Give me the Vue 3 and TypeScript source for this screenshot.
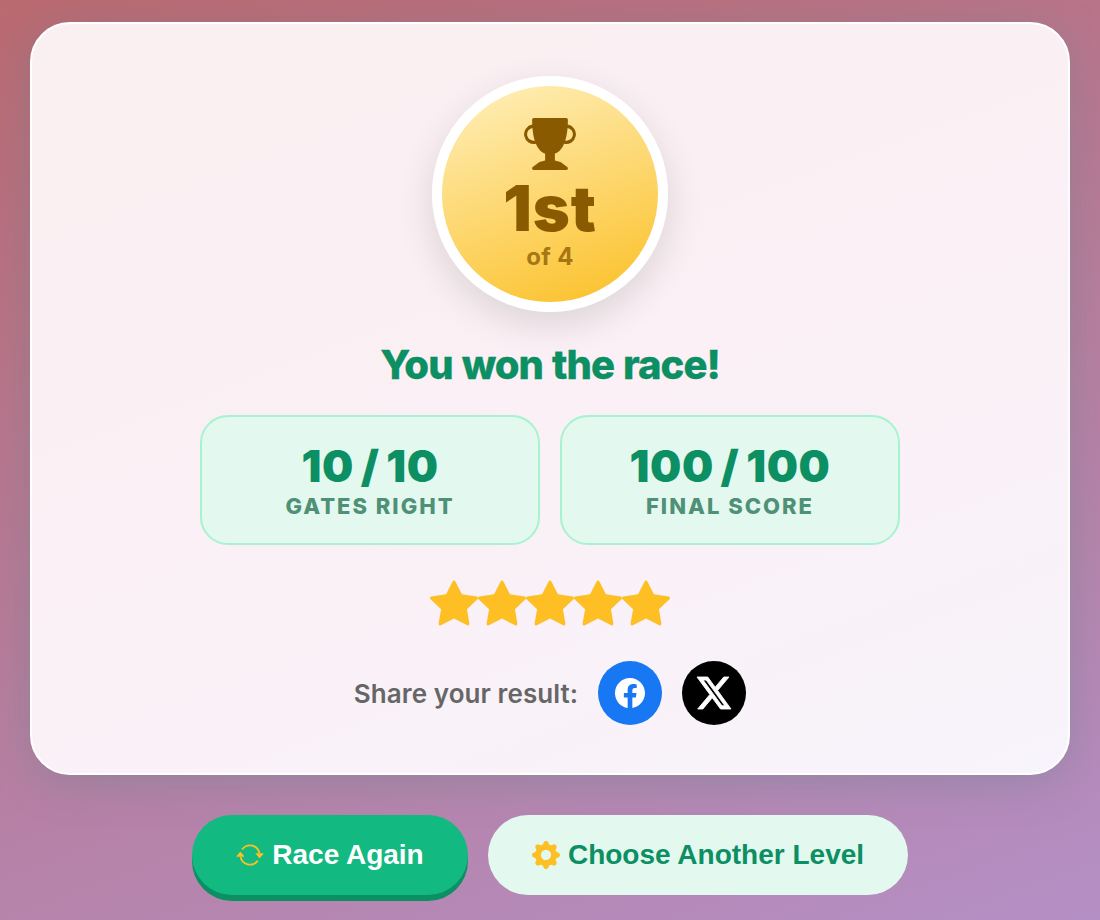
<script setup lang="ts">
interface Stat {
  value: string
  label: string
}

const stats: Stat[] = [
  { value: '10 / 10', label: 'Gates right' },
  { value: '100 / 100', label: 'Final score' },
]
const stars = 5
</script>

<template>
  <main class="screen">
    <section class="card">
      <div class="medal">
        <svg class="trophy" viewBox="0 0 16 16" aria-hidden="true">
          <path d="M2.5.5A.5.5 0 0 1 3 0h10a.5.5 0 0 1 .5.5q0 .807-.034 1.536a3 3 0 1 1-1.133 5.89c-.79 1.865-1.878 2.777-2.833 3.011v2.173l1.425.356c.194.048.377.135.537.255L13.3 15.1a.5.5 0 0 1-.3.9H3a.5.5 0 0 1-.3-.9l1.838-1.379c.16-.12.343-.207.537-.255L6.5 13.11v-2.173c-.955-.234-2.043-1.146-2.833-3.012a3 3 0 1 1-1.132-5.89A33 33 0 0 1 2.5.5m.099 2.54a2 2 0 0 0 .72 3.935c-.333-1.05-.588-2.346-.72-3.935m10.083 3.935a2 2 0 0 0 .72-3.935c-.133 1.59-.388 2.885-.72 3.935" />
        </svg>
        <div class="place">1st</div>
        <div class="field">of 4</div>
      </div>

      <h1 class="title">You won the race!</h1>

      <div class="stats">
        <div v-for="stat in stats" :key="stat.label" class="stat">
          <div class="value">{{ stat.value }}</div>
          <div class="label">{{ stat.label }}</div>
        </div>
      </div>

      <div class="stars">
        <svg v-for="n in stars" :key="n" viewBox="0 0 16 16" aria-hidden="true">
          <path d="M3.612 15.443c-.386.198-.824-.149-.746-.592l.83-4.73L.173 6.765c-.329-.314-.158-.888.283-.95l4.898-.696L7.538.792c.197-.39.73-.39.927 0l2.184 4.327 4.898.696c.441.062.612.636.282.95l-3.522 3.356.83 4.73c.078.443-.36.79-.746.592L8 13.187l-4.389 2.256z" />
        </svg>
      </div>

      <div class="share">
        <span class="share-text">Share your result:</span>
        <a class="social facebook" aria-label="Facebook">
          <svg viewBox="0 0 16 16" aria-hidden="true">
            <path d="M16 8.049c0-4.446-3.582-8.05-8-8.05C3.58 0-.002 3.603-.002 8.05c0 4.017 2.926 7.347 6.75 7.951v-5.625h-2.03V8.05H6.75V6.275c0-2.017 1.195-3.131 3.022-3.131.876 0 1.791.157 1.791.157v1.98h-1.009c-.993 0-1.303.621-1.303 1.258v1.51h2.218l-.354 2.326H9.25V16c3.824-.604 6.75-3.934 6.75-7.951" />
          </svg>
        </a>
        <a class="social x" aria-label="X">
          <svg viewBox="0 1.15 24 21.7" preserveAspectRatio="none" aria-hidden="true">
            <path d="M18.901 1.153h3.68l-8.04 9.19L24 22.846h-7.406l-5.8-7.584-6.638 7.584H.474l8.6-9.83L0 1.154h7.594l5.243 6.932ZM17.61 20.644h2.039L6.486 3.24H4.298Z" />
          </svg>
        </a>
      </div>
    </section>

    <div class="actions">
      <button class="btn primary" type="button">
        <svg viewBox="0 0 16 16" aria-hidden="true">
          <path d="M11.534 7h3.932a.25.25 0 0 1 .192.41l-1.966 2.36a.25.25 0 0 1-.384 0l-1.966-2.36a.25.25 0 0 1 .192-.41m-11 2h3.932a.25.25 0 0 0 .192-.41L2.692 6.23a.25.25 0 0 0-.384 0L.342 8.59A.25.25 0 0 0 .534 9" />
          <path d="M8 3c-1.552 0-2.94.707-3.857 1.818a.5.5 0 1 1-.771-.636A6.002 6.002 0 0 1 13.917 7H12.9A5 5 0 0 0 8 3M3.1 9a5.002 5.002 0 0 0 8.757 2.182.5.5 0 1 1 .771.636A6.002 6.002 0 0 1 2.083 9z" />
        </svg>
        <span>Race Again</span>
      </button>
      <button class="btn secondary" type="button">
        <svg viewBox="0 0 16 16" aria-hidden="true">
          <path d="M9.405 1.05c-.413-1.4-2.397-1.4-2.81 0l-.1.34a1.464 1.464 0 0 1-2.105.872l-.31-.17c-1.283-.698-2.686.705-1.987 1.987l.169.311c.446.82.023 1.841-.872 2.105l-.34.1c-1.4.413-1.4 2.397 0 2.81l.34.1a1.464 1.464 0 0 1 .872 2.105l-.17.31c-.698 1.283.705 2.686 1.987 1.987l.311-.169a1.464 1.464 0 0 1 2.105.872l.1.34c.413 1.4 2.397 1.4 2.81 0l.1-.34a1.464 1.464 0 0 1 2.105-.872l.31.17c1.283.698 2.686-.705 1.987-1.987l-.169-.311a1.464 1.464 0 0 1 .872-2.105l.34-.1c1.4-.413 1.4-2.397 0-2.81l-.34-.1a1.464 1.464 0 0 1-.872-2.105l.17-.31c.698-1.283-.705-2.686-1.987-1.987l-.311.169a1.464 1.464 0 0 1-2.105-.872zM8 10.93a2.929 2.929 0 1 1 0-5.86 2.929 2.929 0 0 1 0 5.858z" />
        </svg>
        <span>Choose Another Level</span>
      </button>
    </div>
  </main>
</template>

<style>
body {
  margin: 0;
}
</style>

<style scoped>
.screen {
  box-sizing: border-box;
  height: 920px;
  padding: 22px 30px 0;
  overflow: hidden;
  font-family: Inter, "Liberation Sans", sans-serif;
  background: linear-gradient(160deg, #ba6970 0%, #b48fc5 100%);
}
svg {
  display: block;
  fill: currentColor;
}
.card {
  box-sizing: border-box;
  height: 753px;
  padding-top: 52px;
  display: flex;
  flex-direction: column;
  align-items: center;
  border: 2px solid #fff;
  border-radius: 40px;
  background: linear-gradient(160deg, #faf0f1 0%, #faf0f5 50%, #f8f4fb 100%);
  box-shadow: 0 8px 40px rgba(100, 130, 140, 0.38);
}
.medal {
  box-sizing: border-box;
  width: 236px;
  height: 236px;
  padding-top: 32px;
  display: flex;
  flex-direction: column;
  align-items: center;
  border: 10px solid #fff;
  border-radius: 50%;
  color: #8a5a00;
  background: linear-gradient(160deg, #fff0bd 0%, #fbbf24 100%);
  box-shadow: 0 12px 36px rgba(0, 0, 0, 0.12);
}
.trophy {
  width: 52px;
  height: 52px;
}
.place {
  margin-top: 9px;
  font-size: 63px;
  line-height: 58px;
  font-weight: 900;
  letter-spacing: 1px;
}
.field {
  margin-top: 6px;
  font-size: 24px;
  line-height: 28px;
  font-weight: 700;
  letter-spacing: 0.3px;
  opacity: 0.75;
}
.title {
  margin: 28px 0 0;
  font-size: 40px;
  line-height: 50px;
  font-weight: 800;
  letter-spacing: -1px;
  word-spacing: 1.4px;
  color: #0b8f63;
  -webkit-text-stroke: 0.3px #0b8f63;
}
.stats {
  margin-top: 25px;
  display: flex;
  gap: 20px;
}
.stat {
  box-sizing: border-box;
  width: 340px;
  height: 130px;
  padding-top: 25px;
  border: 2px solid #a7f3d0;
  border-radius: 28px;
  text-align: center;
  background: #e3f8ee;
}
.value {
  font-size: 44px;
  line-height: 48px;
  font-weight: 900;
  letter-spacing: 0.6px;
  word-spacing: -2.5px;
  color: #0b8f63;
}
.label {
  margin-top: 2px;
  font-size: 22px;
  line-height: 28px;
  font-weight: 800;
  letter-spacing: 2px;
  text-transform: uppercase;
  color: #4f9077;
}
.stars {
  margin-top: 34px;
  display: flex;
  color: #fdbf24;
}
.stars svg {
  width: 48px;
  height: 48px;
}
.share {
  margin-top: 34px;
  display: flex;
  align-items: center;
  gap: 20px;
}
.share-text {
  font-size: 26px;
  font-weight: 600;
  letter-spacing: 0.08px;
  color: #666;
}
.social {
  width: 64px;
  height: 64px;
  display: grid;
  place-items: center;
  border-radius: 50%;
  color: #fff;
}
.facebook {
  background: #1877f2;
}
.facebook svg {
  width: 30px;
  height: 30px;
}
.x {
  background: #000;
}
.x svg {
  width: 34px;
  height: 32px;
  overflow: visible;
  stroke: currentColor;
  stroke-width: 0.6px;
}
.actions {
  margin-top: 40px;
  display: flex;
  justify-content: center;
  gap: 20px;
}
.btn {
  height: 80px;
  padding: 0;
  display: flex;
  align-items: center;
  justify-content: center;
  gap: 8px;
  border: 0;
  border-radius: 40px;
  font: 700 28px "Liberation Sans", Arial, sans-serif;
}
.btn svg {
  width: 28px;
  height: 28px;
  color: #fdbf24;
}
.primary {
  width: 276px;
  color: #fff;
  background: #12b981;
  box-shadow: 0 6px 0 #0b8f63;
}
.secondary {
  width: 420px;
  color: #0b8f63;
  background: #e3f8ee;
}
</style>
